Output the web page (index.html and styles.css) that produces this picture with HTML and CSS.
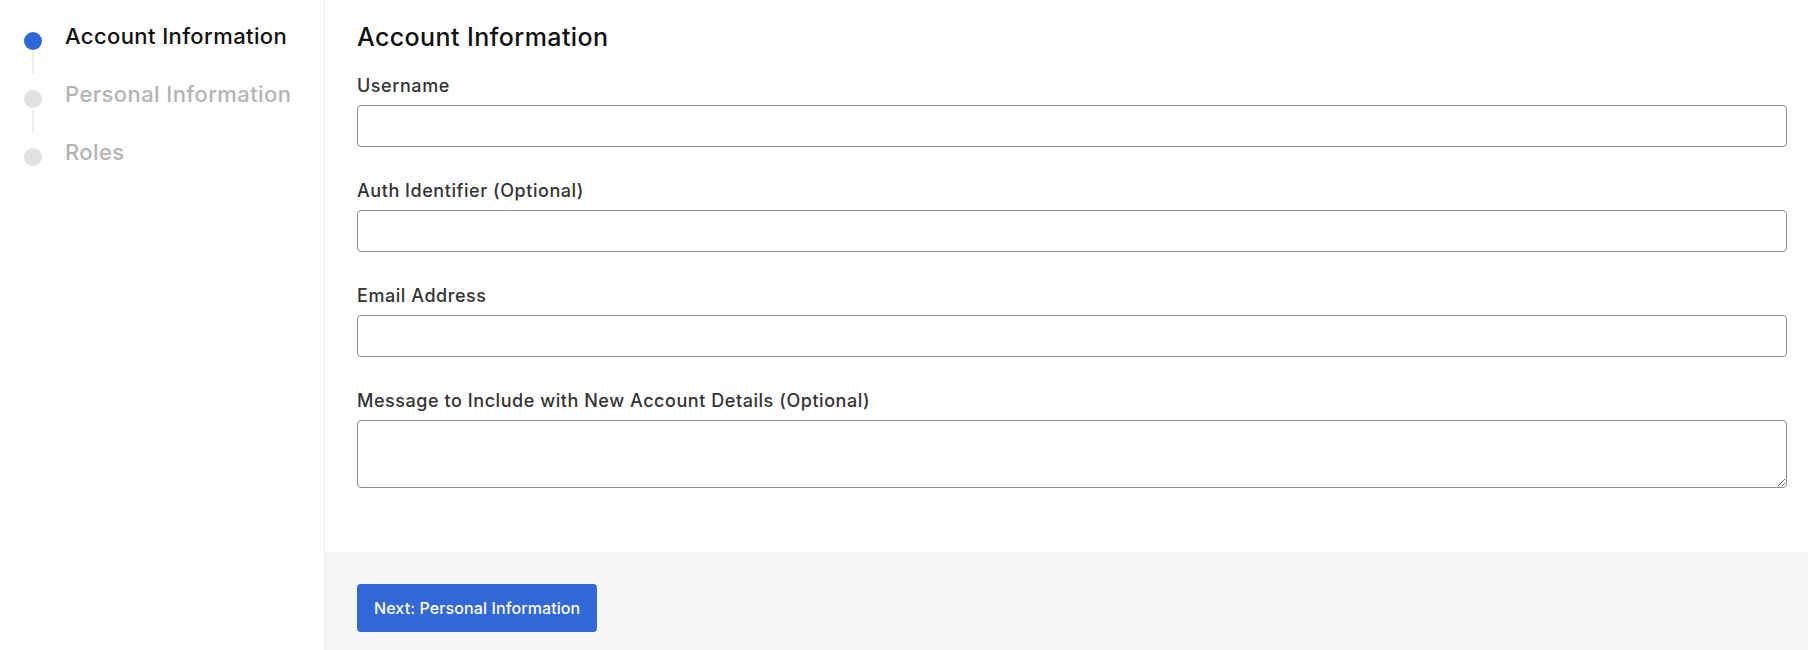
FILE: index.html
```html
<!DOCTYPE html>
<html lang="en">
<head>
    <meta charset="UTF-8">
    <meta name="viewport" content="width=device-width, initial-scale=1.0">
    <title>New Account</title>
    <link rel="stylesheet" href="styles.css">
</head>
<body>
    <div class="sidebar">
        <div class="step active">
            <div class="marker">
                <div class="dot"></div>
                <div class="line"></div>
            </div>
            <div class="step-name">Account Information</div>
        </div>
        <div class="step">
            <div class="marker">
                <div class="dot"></div>
                <div class="line"></div>
            </div>
            <div class="step-name">Personal Information</div>
        </div>
        <div class="step">
            <div class="marker">
                <div class="dot"></div>
            </div>
            <div class="step-name">Roles</div>
        </div>
    </div>

    <div class="main">
        <form class="form">
            <h2>Account Information</h2>
            <div class="field">
                <label for="username">Username</label>
                <input type="text" id="username">
            </div>
            <div class="field">
                <label for="auth">Auth Identifier (Optional)</label>
                <input type="text" id="auth">
            </div>
            <div class="field">
                <label for="email">Email Address</label>
                <input type="email" id="email">
            </div>
            <div class="field">
                <label for="message">Message to Include with New Account Details (Optional)</label>
                <textarea id="message"></textarea>
            </div>
        </form>
        <div class="footer">
            <button type="button" class="btn-next">Next: Personal Information</button>
        </div>
    </div>
</body>
</html>
```

FILE: styles.css
```css
* {
    box-sizing: border-box;
}
body {
    font-family: Inter, 'Liberation Sans', sans-serif;
    display: flex;
    height: 100vh;
    margin: 0;
    background: #fff;
    color: #333;
    overflow: hidden;
}
.sidebar {
    width: 325px;
    flex-shrink: 0;
    padding: 22px 0 0 24px;
    border-right: 1px solid #efefef;
}
.step {
    display: flex;
    align-items: flex-start;
    gap: 23px;
    height: 58px;
}
.marker {
    display: flex;
    flex-direction: column;
    align-items: center;
    width: 18px;
    margin-top: 10px;
}
.dot {
    width: 18px;
    height: 18px;
    border-radius: 50%;
    background: #e1e1e1;
}
.line {
    width: 2px;
    height: 22px;
    margin-top: 2px;
    background: #ececec;
}
.step-name {
    font-size: 22px;
    line-height: 28px;
    font-weight: 500;
    letter-spacing: 0.4px;
    color: #b4b4b4;
    white-space: nowrap;
}
.step.active .dot {
    background: #3267d8;
}
.step.active .step-name {
    color: #111;
}
.main {
    flex: 1;
    display: flex;
    flex-direction: column;
}
.form {
    padding: 22px 21px 32px 32px;
}
.form h2 {
    margin: 0 0 22px;
    font-size: 25px;
    line-height: 30px;
    font-weight: 500;
    letter-spacing: 0.4px;
    color: #111;
}
.field {
    display: flex;
    flex-direction: column;
    margin-bottom: 32px;
}
.field label {
    font-size: 18px;
    line-height: 24px;
    font-weight: 500;
    letter-spacing: 0.55px;
    margin-bottom: 7px;
    color: #333;
}
.field input,
.field textarea {
    width: 100%;
    height: 42px;
    border: 1px solid #8e8e8e;
    border-radius: 4px;
    font-family: inherit;
    font-size: 16px;
    padding: 8px 12px;
}
.field textarea {
    height: 68px;
    resize: vertical;
}
.footer {
    flex: 1;
    background: #f6f6f6;
    padding: 32px;
}
.btn-next {
    height: 48px;
    padding: 0 17px;
    border: none;
    border-radius: 4px;
    background: #3267d8;
    color: #fff;
    font-family: inherit;
    font-size: 16px;
    font-weight: 500;
    letter-spacing: 0.1px;
    cursor: pointer;
}
```
